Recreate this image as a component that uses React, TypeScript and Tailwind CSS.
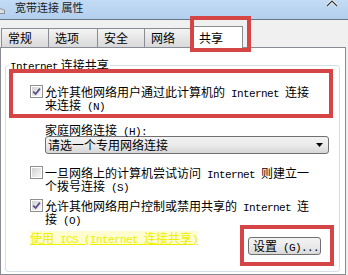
import React from 'react'

function En({ children }: { children: React.ReactNode }) {
  return (
    <span className="font-['Liberation_Mono',monospace] text-[11px] leading-[0px] tracking-[-0.6px]">
      {children}
    </span>
  )
}

function CheckBox({ checked }: { checked?: boolean }) {
  return (
    <div className="w-[13px] h-[13px] shrink-0 border border-[#8f8f8f] bg-white p-px">
      <div className="w-full h-full bg-gradient-to-br from-[#d2d2d2] to-[#f8f8f8]">
        {checked && (
          <svg width="9" height="9" viewBox="0 0 9 9">
            <path d="M1.2 4.6 L3.6 7 L7.9 1.6" fill="none" stroke="#5a4c86" strokeWidth="1.7" />
          </svg>
        )}
      </div>
    </div>
  )
}

const tabs = [
  { label: '常规', w: 'w-[48px]' },
  { label: '选项', w: 'w-[50px]' },
  { label: '安全', w: 'w-[48px]' },
  { label: '网络', w: 'w-[49px]' }
]

export default function App() {
  return (
    <div className="relative w-[348px] h-[275px] overflow-hidden bg-[#f0f0f0] text-[12px] text-black font-['Noto_Sans_CJK_SC',sans-serif] flex flex-col">
      {/* title bar */}
      <div className="h-[20px] shrink-0 flex items-start bg-gradient-to-b from-[#c3dbf4] to-[#b2cfee] border-b border-[#66768a]">
        <svg width="6" height="14" viewBox="0 0 6 14" className="mt-[3px]">
          <path d="M0 5 L5 7 L5 11 L0 11 Z" fill="#8a9099" />
          <path d="M0 6 L4 7.5 L4 10 L0 10 Z" fill="#d9dee4" />
        </svg>
        <span className="ml-[9px] text-[11px] leading-[14px] text-[#1b1b1b]">宽带连接 属性</span>
        <svg width="12" height="7" viewBox="0 0 12 7" className="ml-auto mr-[10px]">
          <path d="M1 6 L6 1 L11 6" fill="none" stroke="#ffffff" strokeWidth="2.6" />
          <path d="M1 6 L6 1 L11 6" fill="none" stroke="#2e2e2e" strokeWidth="1.2" />
        </svg>
      </div>

      {/* tabs */}
      <div className="h-[27px] shrink-0 flex items-end pl-[1px]">
        {tabs.map((t, i) => (
          <div
            key={t.label}
            className={`${t.w} ${i > 0 ? '-ml-px' : ''} h-[19px] border border-b-0 border-[#898c95] bg-gradient-to-b from-[#f4f4f4] to-[#d9d9d9] pl-[6px] leading-[18px]`}
          >
            {t.label}
          </div>
        ))}
        <div className="-ml-px w-[51px] h-[22px] -mb-px relative z-10 border border-b-0 border-[#898c95] bg-white pl-[6px] leading-[21px]">
          共享
        </div>
      </div>

      {/* panel */}
      <div className="w-[346px] flex-1 bg-white border border-[#898c95]">
        <fieldset className="ml-[4px] mt-[11px] w-[335px] border border-[#d5dfe5] rounded-[3px] pb-[16px]">
          <legend className="ml-[3px] px-[1px] leading-[12px]">
            <En>Internet</En> 连接共享
          </legend>

          <div className="mt-[14px] ml-[24px] flex gap-[2px]">
            <CheckBox checked />
            <div className="leading-[13px] whitespace-nowrap">
              允许其他网络用户通过此计算机的<En> Internet </En>连接
              <br />
              来连接<En> (N)</En>
            </div>
          </div>

          <div className="mt-[12px] ml-[39px] leading-[13px]">
            家庭网络连接<En> (H):</En>
          </div>
          <div className="ml-[39px] w-[284px] h-[18px] flex items-center border border-[#707070] rounded-[3px] bg-gradient-to-b from-[#f2f2f2] via-[#ebebeb] to-[#d6d6d6] pl-[2px] pr-[5px]">
            <span className="leading-[12px]">请选一个专用网络连接</span>
            <svg width="7" height="4" viewBox="0 0 7 4" className="ml-auto">
              <path d="M0 0 L7 0 L3.5 4 Z" fill="#000" />
            </svg>
          </div>

          <div className="mt-[12px] ml-[24px] flex gap-[2px]">
            <CheckBox />
            <div className="leading-[13px] whitespace-nowrap">
              一旦网络上的计算机尝试访问<En> Internet </En>则建立一
              <br />
              个拨号连接<En> (S)</En>
            </div>
          </div>

          <div className="mt-[7px] ml-[24px] flex gap-[2px]">
            <CheckBox checked />
            <div className="leading-[13px] whitespace-nowrap">
              允许其他网络用户控制或禁用共享的<En> Internet </En>连
              <br />
              接<En> (O)</En>
            </div>
          </div>

          <div className="mt-[6px] ml-[24px] flex items-start">
            <span className="leading-[13px] whitespace-nowrap text-[#eeee00] underline bg-[#fdfdd0]">
              使用<En> ICS (Internet </En>连接共享<En>)</En>
            </span>
            <button className="ml-auto mr-[18px] mt-[6px] w-[73px] h-[18px] border border-[#707070] rounded-[3px] bg-gradient-to-b from-[#f3f3f3] via-[#ebebeb] to-[#d8d8d8] text-left pl-[4px] leading-[12px]">
              设置<En> (G)...</En>
            </button>
          </div>
        </fieldset>
      </div>

      {/* red annotation boxes */}
      <div className="absolute left-[190px] top-[16px] w-[61px] h-[36px] border-4 border-[#d64545] pointer-events-none z-20" />
      <div className="absolute left-[9px] top-[69px] w-[324px] h-[49px] border-4 border-[#d64545] pointer-events-none z-20" />
      <div className="absolute left-[240px] top-[225px] w-[94px] h-[41px] border-4 border-[#d64545] pointer-events-none z-20" />
    </div>
  )
}
